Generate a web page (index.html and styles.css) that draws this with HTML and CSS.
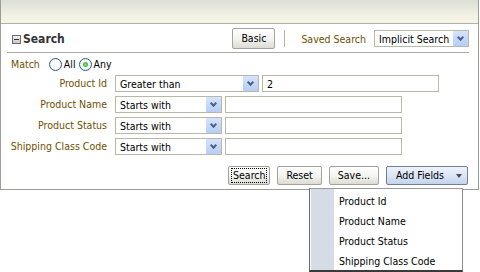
FILE: index.html
```html
<!DOCTYPE html>
<html>
<head>
	<title>Search</title>
	<link rel="stylesheet" href="styles.css">
</head>
<body>
	<div class="panel">
		<div class="panel-head"></div>
		<div class="title-row">
			<div class="title"><span class="toggle"></span>Search</div>
			<div class="title-tools">
				<button class="btn basic">Basic</button>
				<span class="tool-sep"></span>
				<span class="label saved-label">Saved Search</span>
				<div class="select saved"><span class="select-text">Implicit Search</span><span class="arrow"></span></div>
			</div>
		</div>
		<div class="match-row">
			<span class="label">Match</span>
			<span class="radio"></span><span class="radio-text">All</span>
			<span class="radio checked"></span><span class="radio-text">Any</span>
		</div>
		<div class="fields">
			<span class="label field-label">Product Id</span>
			<div class="field-ctrl">
				<div class="select op-wide"><span class="select-text">Greater than</span><span class="arrow"></span></div>
				<input type="text" class="txt txt-wide" value="2">
			</div>
			<span class="label field-label">Product Name</span>
			<div class="field-ctrl">
				<div class="select op"><span class="select-text">Starts with</span><span class="arrow"></span></div>
				<input type="text" class="txt">
			</div>
			<span class="label field-label">Product Status</span>
			<div class="field-ctrl">
				<div class="select op"><span class="select-text">Starts with</span><span class="arrow"></span></div>
				<input type="text" class="txt">
			</div>
			<span class="label field-label">Shipping Class Code</span>
			<div class="field-ctrl">
				<div class="select op"><span class="select-text">Starts with</span><span class="arrow"></span></div>
				<input type="text" class="txt">
			</div>
		</div>
		<div class="actions">
			<button class="btn focus"><span class="focus-ring">Search</span></button>
			<button class="btn">Reset</button>
			<button class="btn">Save...</button>
			<button class="btn add">Add Fields<span class="tri"></span></button>
		</div>
	</div>

	<div class="menu">
		<div class="menu-item">Product Id</div>
		<div class="menu-item">Product Name</div>
		<div class="menu-item">Product Status</div>
		<div class="menu-item">Shipping Class Code</div>
	</div>
</body>
</html>
```

FILE: styles.css
```css
body {
	margin:0;
	background:#fff;
	font-family:"DejaVu Sans Condensed","DejaVu Sans",sans-serif;
	font-size:10.5px;
	color:#000;
}

.panel {
	width:477px;
	height:189px;
	border:1px solid #9a9f95;
	border-top:none;
}
.panel-head {
	height:23px;
	border-bottom:1px solid #b0b3a6;
	background:linear-gradient(#dcdfd6,#f3f2e4 70%,#f7f5e8);
}

.title-row {
	display:flex;
	align-items:center;
	justify-content:space-between;
	height:28px;
	margin:0 9px 0 6px;
	border-bottom:1px solid #a9aaa6;
}
.title {
	display:flex;
	align-items:center;
	font-family:"DejaVu Sans Condensed","DejaVu Sans",sans-serif;
	font-weight:bold;
	font-size:12px;
	color:#333;
	padding-left:5px;
	padding-top:2px;
}
.toggle {
	width:7px;
	height:7px;
	border:1px solid #6b6b6b;
	background:linear-gradient(#f2f2f2,#c8c8c8);
	margin-right:2px;
	position:relative;
}
.toggle:after {
	content:"";
	position:absolute;
	left:1px;
	top:3px;
	width:5px;
	height:1px;
	background:#333;
}
.title-tools {
	display:flex;
	align-items:center;
	padding-top:1px;
}
.tool-sep {
	width:1px;
	height:17px;
	background:#bab39b;
	margin:0 16px 0 9px;
}
.saved-label {
	margin-right:8px;
}

.label {
	color:#6f4f00;
}

.btn {
	font-family:inherit;
	font-size:10.5px;
	color:#000;
	height:19px;
	padding:0 8px;
	border:1px solid #a3a39d;
	border-radius:2px;
	background:linear-gradient(#ffffff,#f3f3ef 55%,#dcdcd4);
	line-height:15px;
}
.basic {
	height:21px;
	width:43px;
}

.select {
	display:flex;
	align-items:center;
	height:15px;
	border:1px solid #b8b8a8;
	background:#fff;
	padding:0 0 0 4px;
}
.select-text {
	flex:1;
	white-space:nowrap;
}
.arrow {
	width:15px;
	height:15px;
	border-radius:1px;
	background:linear-gradient(#d6e3fb,#b6cdf6);
	position:relative;
}
.arrow:after {
	content:"";
	position:absolute;
	left:5px;
	top:4px;
	width:3px;
	height:3px;
	border-right:2px solid #4d6185;
	border-bottom:2px solid #4d6185;
	transform:rotate(45deg);
}
.saved {
	width:89px;
}

.match-row {
	display:flex;
	align-items:center;
	height:20px;
	padding:1px 0 0 10px;
}
.match-row .label {
	margin-right:9px;
}
.radio {
	width:11px;
	height:11px;
	border:1px solid #2a5a8a;
	border-radius:50%;
	background:radial-gradient(#ffffff 40%,#e2e2dc);
	position:relative;
}
.radio.checked:after {
	content:"";
	position:absolute;
	left:3px;
	top:3px;
	width:5px;
	height:5px;
	border-radius:50%;
	background:radial-gradient(#7be27b,#21a121);
}
.radio-text {
	margin:0 3px 0 2px;
}

.fields {
	display:grid;
	grid-template-columns:106px auto;
	column-gap:8px;
	row-gap:4px;
	margin-top:1px;
}
.field-label {
	text-align:right;
	line-height:17px;
	white-space:nowrap;
}
.field-ctrl {
	display:flex;
	gap:3px;
}
.op-wide {
	width:138px;
}
.op {
	width:101px;
}
.txt {
	box-sizing:border-box;
	width:177px;
	height:17px;
	border:1px solid #b8b8a8;
	padding:0 0 0 4px;
	font-family:inherit;
	font-size:10.5px;
	margin:0;
}
.txt-wide {
	width:177px;
}

.actions {
	display:flex;
	justify-content:flex-end;
	gap:7px;
	margin:11px 10px 0 0;
}
.focus {
	padding:0 2px;
}
.focus-ring {
	display:block;
	border:1px dotted #000;
	padding:0 1px;
	line-height:13px;
}
.add {
	width:82px;
	text-align:left;
	padding-left:9px;
	border-color:#6f7f99;
	background:linear-gradient(#eef3fb,#d7e2f3 60%,#c3d3ec);
	position:relative;
}
.tri {
	position:absolute;
	right:5px;
	top:7px;
	border-left:3px solid transparent;
	border-right:3px solid transparent;
	border-top:4px solid #4a4a4a;
}

.menu {
	position:absolute;
	left:309px;
	top:188px;
	box-sizing:border-box;
	width:154px;
	height:84px;
	border:1px solid #6b6b6b;
	border-top-color:#9a9a9a;
	border-right-color:#8c8c8c;
	border-bottom:2px solid #3a3a3a;
	background:linear-gradient(90deg,#fff 1px,#d5dce5 1px,#d5dce5 24px,#fff 24px);
	padding-top:2px;
}
.menu-item {
	height:20px;
	line-height:20px;
	padding-left:29px;
	white-space:nowrap;
}
```
